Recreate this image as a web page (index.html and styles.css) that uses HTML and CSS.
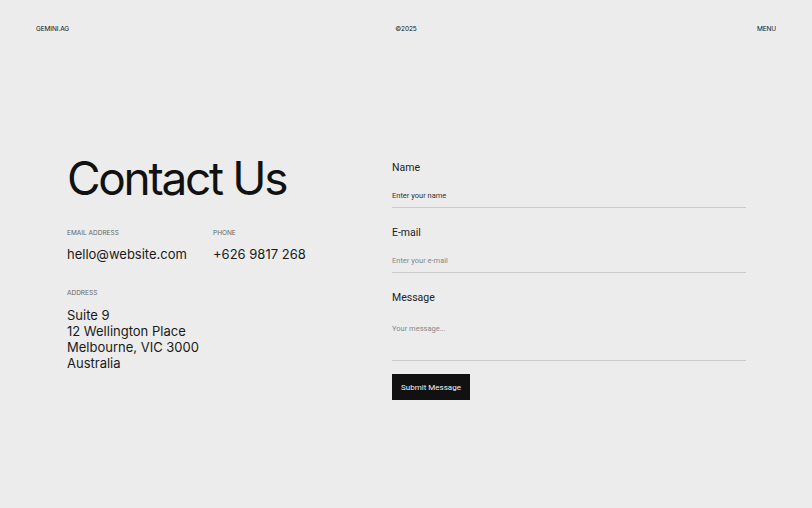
FILE: index.html
```html
<!DOCTYPE html>
<html lang="en">
<head>
<meta charset="utf-8">
<title>Contact Us</title>
<link rel="stylesheet" href="styles.css">
</head>
<body>
<header class="topbar">
  <span class="brand">GEMINI.AG</span>
  <span class="copy">©2025</span>
  <span class="menu">MENU</span>
</header>
<main class="contact">
  <section class="info">
    <h1 class="title">Contact Us</h1>
    <div class="row">
      <div class="item item-email">
        <div class="label">EMAIL ADDRESS</div>
        <div class="value">hello@website.com</div>
      </div>
      <div class="item">
        <div class="label">PHONE</div>
        <div class="value">+626 9817 268</div>
      </div>
    </div>
    <div class="item item-address">
      <div class="label">ADDRESS</div>
      <div class="value address">Suite 9<br>12 Wellington Place<br>Melbourne, VIC 3000<br>Australia</div>
    </div>
  </section>
  <form class="form">
    <label class="field">
      <span class="field-label">Name</span>
      <input class="input input-name" type="text" placeholder="Enter your name">
    </label>
    <label class="field">
      <span class="field-label">E-mail</span>
      <input class="input" type="email" placeholder="Enter your e-mail">
    </label>
    <label class="field">
      <span class="field-label">Message</span>
      <textarea class="input textarea" placeholder="Your message..."></textarea>
    </label>
    <button class="submit" type="button">Submit Message</button>
  </form>
</main>
</body>
</html>
```
FILE: styles.css
```css
* { box-sizing: border-box; }
html, body { margin: 0; padding: 0; }
body {
  background: #ececec;
  color: #111;
  font-family: Inter, "Liberation Sans", sans-serif;
  width: 812px;
  height: 508px;
  overflow: hidden;
}
.topbar {
  display: grid;
  grid-template-columns: 1fr auto 1fr;
  align-items: center;
  padding: 24px 36px 0 36px;
  font-size: 6.5px;
  line-height: 10px;
  letter-spacing: -0.1px;
}
.copy { text-align: center; }
.menu { text-align: right; }
.contact {
  display: flex;
  padding: 119px 66px 0 67px;
}
.info {
  width: 325px;
  flex: none;
}
.title {
  margin: 0;
  font-size: 46px;
  font-weight: 400;
  line-height: 50px;
  letter-spacing: -2.3px;
}
.row {
  display: flex;
  margin-top: 25px;
}
.item-email { width: 146px; }
.label {
  font-size: 6.5px;
  line-height: 10px;
  color: #666;
  letter-spacing: 0;
}
.value {
  margin-top: 7px;
  font-size: 13px;
  line-height: 18px;
  color: #1a1a1a;
}
.item-address { margin-top: 25px; }
.address { margin-top: 9px; line-height: 16px; }
.form {
  flex: 1;
  display: flex;
  flex-direction: column;
  font-family: Roboto, "Liberation Sans", sans-serif;
  padding-top: 8px;
}
.field {
  display: flex;
  flex-direction: column;
  margin-bottom: 18px;
}
.field-label {
  font-size: 10.5px;
  line-height: 14px;
  color: #222;
}
.input {
  margin-top: 14px;
  border: 0;
  border-bottom: 1px solid #c8c8c8;
  background: transparent;
  font-family: Roboto, "Liberation Sans", sans-serif;
  font-size: 7.5px;
  padding: 0 0 5px 0;
  height: 19px;
  outline: none;
  color: #111;
}
.input::placeholder { color: #888; }
.input-name::placeholder { color: #333; }
.textarea {
  height: 42px;
  resize: none;
  padding-top: 5px;
}
.textarea::placeholder { color: #888; }
.submit {
  align-self: flex-start;
  margin-top: -5px;
  background: #111;
  color: #f4f4f4;
  border: 0;
  font-family: Roboto, "Liberation Sans", sans-serif;
  font-size: 8px;
  font-weight: 400;
  width: 78px;
  height: 26px;
  padding: 0;
}
```
